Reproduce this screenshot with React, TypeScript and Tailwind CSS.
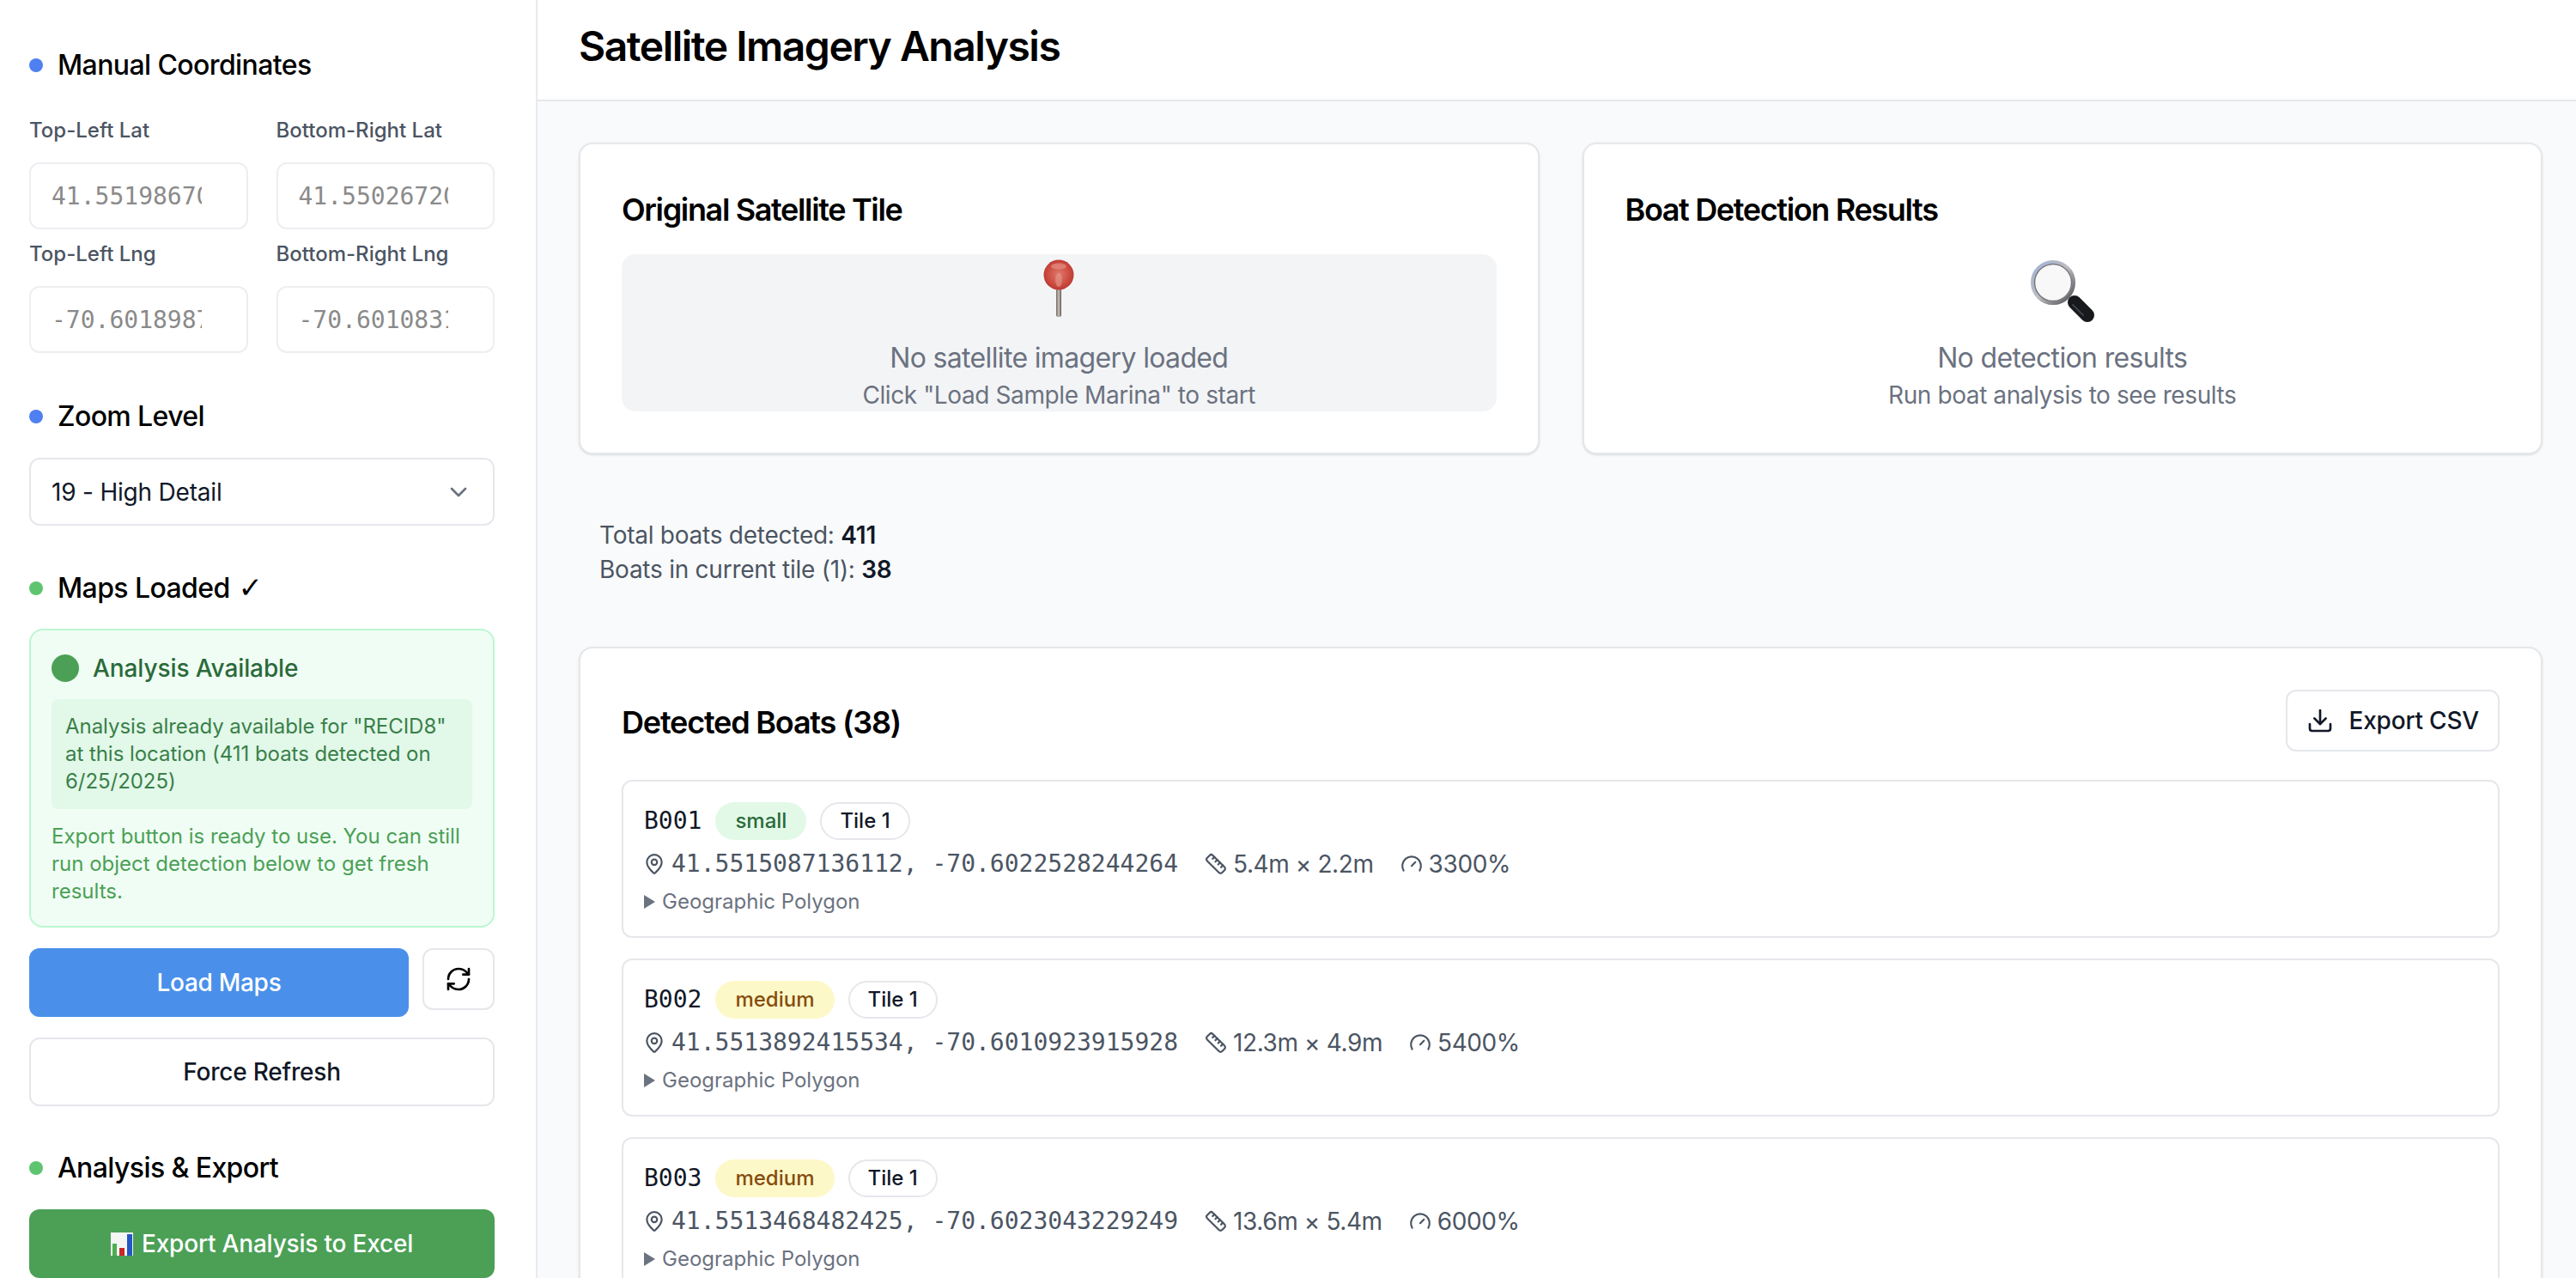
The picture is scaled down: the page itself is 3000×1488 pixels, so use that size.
import { ChevronDown, Download, Gauge, MapPin, RefreshCw, Ruler } from "lucide-react";

const boats = [
  { id: "B001", size: "small", coords: "41.5515087136112, -70.6022528244264", dims: "5.4m × 2.2m", conf: "3300%" },
  { id: "B002", size: "medium", coords: "41.5513892415534, -70.6010923915928", dims: "12.3m × 4.9m", conf: "5400%" },
  { id: "B003", size: "medium", coords: "41.5513468482425, -70.6023043229249", dims: "13.6m × 5.4m", conf: "6000%" },
];

const SectionTitle = ({ color, children, className }: { color: string; children: React.ReactNode; className: string }) => (
  <div className={`flex items-center gap-[17px] h-[48px] text-[32px] font-medium tracking-[-0.6px] text-black ${className}`}>
    <span className={`w-[16px] h-[16px] rounded-full ${color}`} />
    <span className="leading-[44px] h-[44px]">{children}</span>
  </div>
);

const CoordField = ({ label, value }: { label: string; value: string }) => (
  <div className="min-w-0">
    <div className="h-[32px] leading-[32px] text-[24px] font-medium text-[#4b5563] whitespace-nowrap overflow-hidden">{label}</div>
    <input
      readOnly
      placeholder={value}
      className="mt-[21px] w-full h-[78px] pl-[24px] pr-[52px] bg-white border-2 border-[#eceef1] rounded-[12px] text-[28px] font-['DejaVu_Sans_Mono',monospace] placeholder:text-[#8a8a8a] outline-none"
    />
  </div>
);

const Sidebar = () => (
  <aside className="w-[626px] shrink-0 h-full overflow-hidden bg-white border-r-2 border-[#e8eaee] pt-[52px] pl-[34px] pr-[48px]">
    <SectionTitle color="bg-[#4f80f0]" className="">Manual Coordinates</SectionTitle>
    <div className="mt-[36px] grid grid-cols-2 gap-x-[33px] gap-y-[13px]">
      <CoordField label="Top-Left Lat" value="41.551986700000" />
      <CoordField label="Bottom-Right Lat" value="41.550267200000" />
      <CoordField label="Top-Left Lng" value="-70.601898700000" />
      <CoordField label="Bottom-Right Lng" value="-70.601083100000" />
    </div>

    <SectionTitle color="bg-[#4f80f0]" className="mt-[50px]">Zoom Level</SectionTitle>
    <div className="mt-[24px] h-[79px] flex items-center justify-between pl-[24px] pr-[24px] border-2 border-[#e5e7eb] rounded-[12px] text-[28px] tracking-[-0.2px] text-[#111827]">
      19 - High Detail
      <ChevronDown className="w-[32px] h-[32px] text-[#6b7280]" strokeWidth={2} />
    </div>

    <SectionTitle color="bg-[#5fc46f]" className="mt-[49px]">
      Maps Loaded <span className="ml-[2px] text-[34px] leading-none font-normal font-['DejaVu_Sans',sans-serif]">✓</span>
    </SectionTitle>
    <div className="mt-[23px] border-2 border-[#bbf7d0] bg-[#f0fdf4] rounded-[16px] px-[24px] pt-[24px] pb-[24px]">
      <div className="flex items-center gap-[16px] h-[40px] text-[28px] font-medium tracking-[-0.1px] text-[#2a6a3a]">
        <span className="w-[32px] h-[32px] rounded-full bg-[#4ba056]" />
        Analysis Available
      </div>
      <div className="mt-[16px] bg-[#e2f8e9] rounded-[8px] p-[16px] text-[24px] leading-[32px] tracking-[-0.05px] text-[#3a7f49]">
        Analysis already available for "RECID8" at this location (411 boats detected on 6/25/2025)
      </div>
      <p className="mt-[16px] text-[24px] leading-[32px] text-[#4ba056]">
        Export button is ready to use. You can still run object detection below to get fresh results.
      </p>
    </div>

    <div className="mt-[24px] flex gap-[16px] items-start">
      <button className="flex-1 h-[80px] rounded-[12px] bg-[#4a90ea] text-white text-[28px] font-medium tracking-[-0.3px]">Load Maps</button>
      <button className="w-[84px] h-[72px] flex items-center justify-center bg-white border-2 border-[#e5e7eb] rounded-[12px]">
        <RefreshCw className="w-[32px] h-[32px] text-black" strokeWidth={2} />
      </button>
    </div>
    <button className="mt-[24px] w-full h-[80px] bg-white border-2 border-[#e5e7eb] rounded-[12px] text-[28px] font-medium tracking-[-0.2px] text-[#111827]">
      Force Refresh
    </button>

    <SectionTitle color="bg-[#5fc46f]" className="mt-[48px]">Analysis &amp; Export</SectionTitle>
    <button className="mt-[24px] w-full h-[80px] flex items-center justify-center gap-[10px] rounded-[12px] bg-[#4ba056] text-white text-[28px] font-medium tracking-[-0.2px]">
      <svg width="26" height="27" viewBox="0 0 26 27" aria-hidden="true">
        <rect width="26" height="27" fill="#f4f6f4" />
        <rect x="2" y="13" width="5" height="14" fill="#4caf50" />
        <rect x="10" y="18" width="6" height="9" fill="#c62828" />
        <rect x="19" y="2" width="6" height="25" fill="#2456c4" />
      </svg>
      Export Analysis to Excel
    </button>
  </aside>
);

const Pin = () => (
  <svg width="40" height="68" viewBox="0 0 40 68" aria-hidden="true">
    <defs>
      <radialGradient id="ball" cx="50%" cy="48%" r="55%">
        <stop offset="0%" stopColor="#e07a6c" />
        <stop offset="60%" stopColor="#cf4f45" />
        <stop offset="100%" stopColor="#b83630" />
      </radialGradient>
      <linearGradient id="stick" x1="0" x2="1" y1="0" y2="0">
        <stop offset="0%" stopColor="#6f665f" />
        <stop offset="50%" stopColor="#c9c4bc" />
        <stop offset="100%" stopColor="#5c5650" />
      </linearGradient>
    </defs>
    <rect x="17" y="34" width="6" height="33" rx="2.5" fill="url(#stick)" />
    <circle cx="20" cy="18" r="17.5" fill="url(#ball)" />
    <ellipse cx="20" cy="8" rx="9" ry="3.5" fill="#e58f84" opacity="0.7" />
    <ellipse cx="20" cy="24" rx="4" ry="8" fill="#e59a8c" opacity="0.6" />
  </svg>
);

const Magnifier = () => (
  <svg width="76" height="74" viewBox="0 0 76 74" aria-hidden="true">
    <defs>
      <linearGradient id="rim" x1="0" x2="1" y1="0" y2="1">
        <stop offset="0%" stopColor="#9fb4d6" />
        <stop offset="50%" stopColor="#bdbdc0" />
        <stop offset="100%" stopColor="#4a4b4f" />
      </linearGradient>
    </defs>
    <line x1="52" y1="50" x2="67" y2="65" stroke="#17191d" strokeWidth="16" strokeLinecap="round" />
    <line x1="50" y1="53" x2="62" y2="65" stroke="#3d4046" strokeWidth="2" strokeLinecap="round" />
    <circle cx="27" cy="27" r="24" fill="#f8f8f9" stroke="url(#rim)" strokeWidth="4" />
    <circle cx="27" cy="27" r="21.5" fill="none" stroke="#77787c" strokeWidth="1.5" />
  </svg>
);

const EmptyState = ({ icon, title, hint }: { icon: React.ReactNode; title: string; hint: string }) => (
  <div className="h-[183px] flex flex-col items-center text-center overflow-hidden">
    <div className="h-[101px] flex items-start pt-[6px]">{icon}</div>
    <div className="h-[40px] leading-[40px] text-[32px] tracking-[-0.65px] text-[#6b7280]">{title}</div>
    <div className="mt-[3px] h-[39px] leading-[40px] text-[28px] tracking-[-0.4px] text-[#6b7280]">{hint}</div>
  </div>
);

const BoatRow = ({ boat }: { boat: (typeof boats)[number] }) => (
  <div className="h-[184px] border-2 border-[#e5e7eb] rounded-[12px] pt-[24px] px-[24px]">
    <div className="flex items-center gap-[16px] h-[44px]">
      <span className="text-[28px] font-['DejaVu_Sans_Mono',monospace] text-[#111827]">{boat.id}</span>
      <span
        className={
          boat.size === "small"
            ? "h-[44px] px-[23px] flex items-center rounded-full bg-[#e3f9e8] text-[24px] font-medium text-[#2a6a3a]"
            : "h-[44px] px-[23px] flex items-center rounded-full bg-[#fdf8c8] text-[24px] font-medium text-[#854d0e]"
        }
      >
        {boat.size}
      </span>
      <span className="h-[44px] px-[21px] flex items-center rounded-full bg-white border-2 border-[#e5e7eb] text-[24px] font-medium text-[#111827]">
        Tile 1
      </span>
    </div>
    <div className="mt-[12px] h-[32px] flex items-center text-[28px] tracking-[-0.4px] text-[#4b5563]">
      <MapPin className="w-[26px] h-[26px] -ml-[1px] mr-[7px]" strokeWidth={2} />
      <span className="font-['DejaVu_Sans_Mono',monospace] tracking-normal">{boat.coords}</span>
      <Ruler className="w-[26px] h-[26px] ml-[31px] mr-[7px]" strokeWidth={2} />
      <span>{boat.dims}</span>
      <Gauge className="w-[26px] h-[26px] ml-[31px] mr-[7px]" strokeWidth={2} />
      <span>{boat.conf}</span>
    </div>
    <details className="mt-[12px] text-[24px] leading-[32px] text-[#6b7280]">
      <summary className="list-none flex items-center gap-[8px]">
        <svg width="13" height="16" viewBox="0 0 13 16" aria-hidden="true">
          <polygon points="0,0 13,8 0,16" fill="#6b7280" />
        </svg>
        Geographic Polygon
      </summary>
    </details>
  </div>
);

export default function App() {
  return (
    <div className="flex w-[3000px] h-[1488px] overflow-hidden bg-[#f9fafb] font-['Inter',sans-serif]">
      <Sidebar />
      <main className="flex-1 min-w-0 h-full overflow-hidden">
        <header className="h-[118px] bg-white border-b-2 border-[#e5e7eb] pl-[48px] flex items-center">
          <h1 className="text-[48px] font-semibold tracking-[-1.5px] text-black -mt-[8px]">Satellite Imagery Analysis</h1>
        </header>
        <div className="pt-[48px] pl-[48px] pr-[39px]">
          <div className="grid grid-cols-2 gap-x-[50px]">
            <section className="bg-white border-2 border-[#e5e7eb] rounded-[16px] shadow-sm px-[48px] pt-[48px] pb-[48px]">
              <h2 className="h-[52px] leading-[56px] text-[36px] font-semibold tracking-[-1.35px] text-black">Original Satellite Tile</h2>
              <div className="mt-[28px] bg-[#f3f4f6] rounded-[16px]">
                <EmptyState icon={<Pin />} title="No satellite imagery loaded" hint={'Click "Load Sample Marina" to start'} />
              </div>
            </section>
            <section className="bg-white border-2 border-[#e5e7eb] rounded-[16px] shadow-sm px-[48px] pt-[48px] pb-[48px]">
              <h2 className="h-[52px] leading-[56px] text-[36px] font-semibold tracking-[-1.35px] text-black">Boat Detection Results</h2>
              <div className="mt-[28px]">
                <EmptyState icon={<Magnifier />} title="No detection results" hint="Run boat analysis to see results" />
              </div>
            </section>
          </div>

          <div className="mt-[74px] px-[24px] text-[28px] leading-[40px] tracking-[-0.25px] text-[#4b5563]">
            <div>
              Total boats detected: <strong className="font-semibold text-[#111827]">411</strong>
            </div>
            <div>
              Boats in current tile (1): <strong className="font-semibold text-[#111827]">38</strong>
            </div>
          </div>

          <section className="mt-[70px] bg-white border-2 border-[#e5e7eb] rounded-[16px] shadow-sm px-[48px] pt-[48px] pb-[48px]">
            <div className="flex items-center justify-between h-[72px]">
              <h2 className="pt-[4px] text-[36px] font-semibold tracking-[-1.2px] text-black">Detected Boats (38)</h2>
              <button className="h-[72px] pl-[22px] pr-[22px] flex items-center gap-[18px] bg-white border-2 border-[#e5e7eb] rounded-[12px] text-[28px] font-medium tracking-[-0.2px] text-[#111827]">
                <Download className="w-[32px] h-[32px]" strokeWidth={2} />
                Export CSV
              </button>
            </div>
            <div className="mt-[33px] flex flex-col gap-[24px]">
              {boats.map((boat) => (
                <BoatRow key={boat.id} boat={boat} />
              ))}
            </div>
          </section>
        </div>
      </main>
    </div>
  );
}
